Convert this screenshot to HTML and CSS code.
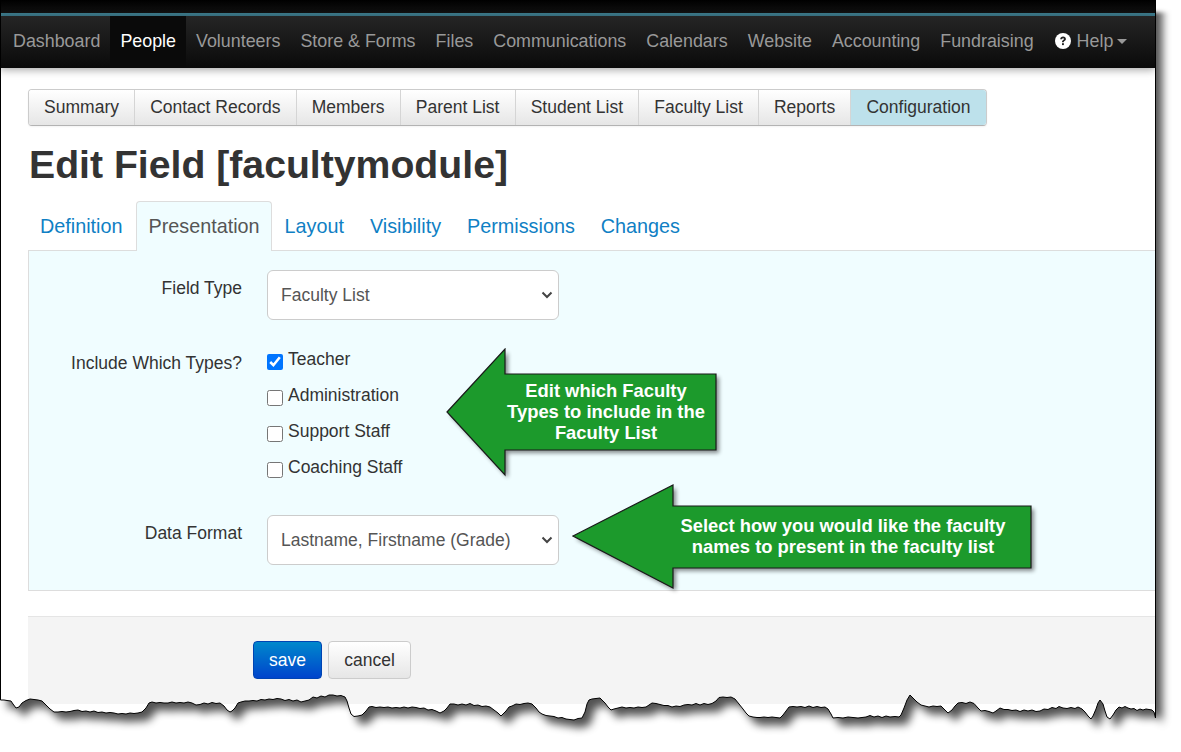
FILE: index.html
```html
<!DOCTYPE html>
<html lang="en">
<head>
<meta charset="utf-8">
<title>Edit Field</title>
<link rel="stylesheet" href="styles.css">
</head>
<body>
<div class="shot">
  <div class="topstrip"></div>
  <nav class="navbar">
    <a class="nav-item">Dashboard</a>
    <a class="nav-item active">People</a>
    <a class="nav-item">Volunteers</a>
    <a class="nav-item">Store &amp; Forms</a>
    <a class="nav-item">Files</a>
    <a class="nav-item">Communications</a>
    <a class="nav-item">Calendars</a>
    <a class="nav-item">Website</a>
    <a class="nav-item">Accounting</a>
    <a class="nav-item">Fundraising</a>
    <a class="nav-item help">
      <svg class="help-icon" viewBox="0 0 16 16"><circle cx="8" cy="8" r="8" fill="#fff"/><path d="M5.2 6.2C5.3 4.6 6.5 3.6 8.1 3.6c1.7 0 2.8 1 2.8 2.3 0 1.1-.7 1.7-1.4 2.2-.6.4-.7.7-.7 1.2H7c0-1.1.3-1.6 1.1-2.2.6-.4.9-.7.9-1.1 0-.5-.4-.8-.9-.8-.6 0-1 .4-1.1 1z" fill="#222"/><rect x="7" y="10.2" width="1.9" height="1.9" fill="#222"/></svg>
      Help<span class="caret"></span>
    </a>
  </nav>

  <main class="content">
    <div class="subnav">
      <a class="sub-btn">Summary</a>
      <a class="sub-btn">Contact Records</a>
      <a class="sub-btn">Members</a>
      <a class="sub-btn">Parent List</a>
      <a class="sub-btn">Student List</a>
      <a class="sub-btn">Faculty List</a>
      <a class="sub-btn">Reports</a>
      <a class="sub-btn current">Configuration</a>
    </div>

    <h1 class="title">Edit Field [facultymodule]</h1>

    <div class="tabs">
      <a class="tab">Definition</a>
      <a class="tab selected">Presentation</a>
      <a class="tab">Layout</a>
      <a class="tab">Visibility</a>
      <a class="tab">Permissions</a>
      <a class="tab">Changes</a>
    </div>

    <form class="panel">
      <div class="row row-type">
        <label class="row-label">Field Type</label>
        <select class="picker"><option>Faculty List</option></select>
      </div>
      <div class="row row-checks">
        <label class="row-label label-checks">Include Which Types?</label>
        <div class="checks">
          <label class="check"><input type="checkbox" checked><span>Teacher</span></label>
          <label class="check"><input type="checkbox"><span>Administration</span></label>
          <label class="check"><input type="checkbox"><span>Support Staff</span></label>
          <label class="check"><input type="checkbox"><span>Coaching Staff</span></label>
        </div>
      </div>
      <div class="row row-format">
        <label class="row-label">Data Format</label>
        <select class="picker"><option>Lastname, Firstname (Grade)</option></select>
      </div>
    </form>

    <div class="actions">
      <button class="btn btn-save" type="button">save</button>
      <button class="btn btn-cancel" type="button">cancel</button>
    </div>
  </main>
</div>

<div class="callout callout-types">
  <svg class="callout-shape" viewBox="0 0 290 146"><polygon class="arrow-shadow" points="1,64 59,1 59,26 270,26 270,102 59,102 59,127"/><polygon class="arrow" points="1,64 59,1 59,26 270,26 270,102 59,102 59,127"/></svg>
  <p class="callout-text">Edit which Faculty<br>Types to include in the<br>Faculty List</p>
</div>
<div class="callout callout-format">
  <svg class="callout-shape" viewBox="0 0 480 122"><polygon class="arrow-shadow" points="1,52 101,1 101,22 459,22 459,84 101,84 101,104"/><polygon class="arrow" points="1,52 101,1 101,22 459,22 459,84 101,84 101,104"/></svg>
  <p class="callout-text">Select how you would like the faculty<br>names to present in the faculty list</p>
</div>

<svg class="torn" viewBox="0 0 1181 752">
  <defs>
    <path id="paper" d="M0.5 -2H1155.5V718L1154 712 1152 710 1149 709.5 1146 709 1143 710 1140 709 1137 710.5 1134 708.5 1131 709 1128 708 1125 706.5 1122 708 1119 707 1116 710 1113 715 1110 719 1107 717 1105 711 1103 704 1100 700 1098 703 1096 709 1093 716 1091 719 1088 716 1085 712 1082 709 1078 707 1075 708.5 1071 707.5 1067 708.5 1063 708 1059 706.5 1056 708.5 1052 707.5 1048 709.5 1044 709 1040 711 1036 711.5 1032 710 1028 711 1024 710 1020 711.5 1016 710 1012 710.5 1008 709.5 1004 709.5 1000 708 996 711 993 713 989 711.5 985 710.5 981 711 978 708 974 703.5 970 702 966 703.5 962 702.5 958 703 955 706 952 710 948 713 945 710 941 706 937 706.5 933 706 929 707 925 706 921 705 917 702 913 698 910 695 907 700 904 708 901 715 899 717 895 716.5 890 717 886 716 882 717.5 878 716 874 717 870 715.5 866 717 862 717.5 858 718 853 717.5 848 717 843 718 838 717.5 833 718 831 714 828 709 825 707 821 707.5 817 706.5 813 707.5 809 706 805 707.5 801 706.5 797 707 793 706.5 789 707 786 711 783 715 780 718 776 717.5 772 717 768 717.5 764 717 760 717.5 757 717.5 753 717 749 716 746 713 743 709 739 704 735 699 731 697 727 697.5 723 697 719 697.5 716 701 712 703.5 708 704.5 704 703.5 700 705 696 703.5 692 705 688 704.5 684 705 680 706.5 676 706 672 707 668 705.5 664 705.5 660 704.5 656 703.5 652 703 649 705 646 707 642 707.5 638 707 634 708 630 707.5 626 708 622 707 618 708 614 709 611 710 608 707 605 703 602 700 600 698 596 698.5 592 699 589 700 587 704 585 712 582 718 578 718.5 574 720 570 719.5 566 719 562 717.5 558 718 554 716.5 550 716 546 715.5 542 714 539 712 536 708 532 704 528 703 524 703.5 520 704.5 516 704 512 706 509 707 506 711 503 714 501 716 498 713 494 710 490 707 486 706 482 706.5 478 705 474 705.5 470 703.5 466 705 462 704 458 705 454 704 450 704 447 708 444 711 440 713 436 711 432 709.5 428 710 424 708 420 708.5 416 707.5 412 707 408 708 404 707 400 708 396 707.5 392 708 388 707 384 707.5 380 707 376 707.5 372 706.5 369 707 366 711 362 715 358 716 354 716.5 351 714 349 708 347 701 345 697 341 695.5 337 696 333 695 329 695 325 697 321 696 317 698 313 697 309 700 305 701 301 702 297 700 293 701 289 699.5 285 700.5 281 699 277 698.5 273 699.5 269 699 265 700 261 699.5 257 701 253 700.5 249 701 245 701 241 702 238 703 235 708 232 711 230 712 227 710 224 706 220 703 216 703.5 212 702.5 208 704 204 703 200 704.5 196 705 192 703 188 702 184 703 180 702.5 176 703 172 702 168 703 164 703 160 702.5 156 703 152 702 149 703 146 708 142 712 138 713 134 713.5 130 713 126 714 122 713.5 118 714 114 713 110 712.5 106 713 102 712 98 712.5 94 711 90 712 86 711 82 711.5 78 710 74 710.5 70 711.5 66 712 62 711.5 58 712 54 712 50 709 46 705 42 701 38 700 34 699.5 30 699 26 700.5 22 703 19 707 16 708 13 704 11 701 7 700.5 4 700 0.5 700Z"/>
    <filter id="soft" x="-5%" y="-5%" width="110%" height="110%"><feGaussianBlur stdDeviation="4"/></filter>
    <filter id="fade" x="-50%" y="-100%" width="200%" height="300%"><feGaussianBlur stdDeviation="2"/></filter>
    <mask id="outside" maskUnits="userSpaceOnUse" x="0" y="0" width="1181" height="752">
      <rect class="mask-on" width="1181" height="752"/>
      <use class="mask-off" href="#paper"/>
      <rect class="mask-off" x="1150" y="-10" width="40" height="22" filter="url(#fade)"/>
    </mask>
  </defs>
  <rect class="paper-outside" width="1181" height="752" mask="url(#outside)"/>
  <g mask="url(#outside)">
    <use class="paper-shadow" href="#paper" filter="url(#soft)" transform="translate(7 8)"/>
  </g>
  <use class="paper-edge" href="#paper"/>
</svg>
</body>
</html>
```

FILE: styles.css
```css
* { box-sizing: border-box; }
html, body { margin: 0; padding: 0; background: #fff; }
body {
  position: relative;
  width: 1181px;
  height: 752px;
  overflow: hidden;
  font-family: "Liberation Sans", Arial, sans-serif;
  font-size: 17.5px;
  color: #333;
}
.shot { width: 1155px; height: 730px; overflow: hidden; background: #fff; }
.topstrip { height: 16px; background: linear-gradient(#000 0, #111 13px, #3d7b8c 13px, #3d7b8c 16px); }
.navbar {
  display: flex;
  height: 52px;
  background: linear-gradient(#252525, #0a0a0a);
  box-shadow: 0 2px 8px rgba(0, 0, 0, .35);
  position: relative;
  padding: 0 0 2px 3px;
}
.nav-item {
  display: flex;
  align-items: center;
  padding: 0 10px;
  color: #999;
  font-size: 17.88px;
  white-space: nowrap;
}
.nav-item.active { background: #0a0a0a; color: #fff; margin-bottom: -2px; padding-bottom: 2px; }
.help { gap: 6px; padding-left: 11px; }
.help-icon { width: 16px; height: 16px; }
.caret {
  width: 0; height: 0;
  margin-left: -2px;
  border-left: 5px solid transparent;
  border-right: 5px solid transparent;
  border-top: 5px solid #999;
}
.content { padding-top: 21px; }
.subnav {
  display: inline-flex;
  margin-left: 28px;
  height: 37px;
  border: 1px solid #ccc;
  border-bottom-color: #b3b3b3;
  border-radius: 4px;
  vertical-align: top;
  box-shadow: 0 1px 2px rgba(0,0,0,.05);
}
.sub-btn {
  display: flex;
  align-items: center;
  padding: 0 15.1px;
  background: linear-gradient(#fff, #e6e6e6);
  border-left: 1px solid #d5d5d5;
  color: #333;
  white-space: nowrap;
}
.sub-btn:first-child { border-left: 0; border-radius: 3px 0 0 3px; }
.sub-btn.current { background: #bde1eb; border-radius: 0 3px 3px 0; }
.title {
  margin: 15px 0 0 29px;
  height: 48px;
  font-size: 39.2px;
  line-height: 48px;
  font-weight: 700;
  color: #333;
}
.tabs {
  display: flex;
  margin: 12px 0 0 28px;
  height: 49px;
}
.tab {
  display: flex;
  align-items: center;
  padding: 2px 12px 0;
  margin-right: 2px;
  font-size: 19.8px;
  color: #0f7fc4;
  white-space: nowrap;
}
.tab.selected {
  color: #555;
  background: #f0fdff;
  border: 1px solid #ddd;
  border-bottom: 0;
  border-radius: 4px 4px 0 0;
  height: 50px;
  padding: 0 11px;
  margin-right: 1px;
  position: relative;
  z-index: 1;
}
.panel {
  height: 341px;
  margin-left: 28px;
  padding-top: 19px;
  background: #f0fdff;
  border: 1px solid #ddd;
  border-right: 0;
  display: flex;
  flex-direction: column;
}
.row { display: grid; grid-template-columns: 213px 292px; column-gap: 25px; }
.row-label { text-align: right; padding-top: 8px; color: #333; line-height: 20px; }
.label-checks { padding-top: 4px; }
.row-checks { margin-top: 29px; height: 166px; }
.picker {
  appearance: none;
  -webkit-appearance: none;
  height: 50px;
  width: 292px;
  padding: 0 13px;
  font: 17.5px "Liberation Sans", Arial, sans-serif;
  color: #555;
  background-color: #fff;
  background-image: url("data:image/svg+xml,%3Csvg xmlns='http://www.w3.org/2000/svg' viewBox='0 0 12 8'%3E%3Cpath d='M1.5 1.5 6 6l4.5-4.5' fill='none' stroke='%23444' stroke-width='2'/%3E%3C/svg%3E");
  background-repeat: no-repeat;
  background-size: 12px 8px;
  background-position: right 5px center;
  border: 1px solid #ccc;
  border-radius: 6px;
}
.checks { display: flex; flex-direction: column; gap: 16px; }
.check { display: flex; align-items: flex-start; height: 20px; line-height: 20px; gap: 5px; }
.check input { width: 16px; height: 16px; margin: 5px 0 0 0; flex: none; }
.actions {
  margin: 25px 0 0 28px;
  height: 88px;
  padding: 24px 0 0 225px;
  display: flex;
  gap: 6px;
  align-items: flex-start;
  background: #f4f4f4;
  border-top: 1px solid #e5e5e5;
}
.btn {
  height: 38px;
  font: 17.5px "Liberation Sans", Arial, sans-serif;
  border-radius: 4px;
  padding: 0 10px;
}
.btn-save { width: 69px; color: #fff; background: linear-gradient(#0088cc, #0044cc); border: 1px solid #0044b3; }
.btn-cancel { width: 83px; color: #333; background: linear-gradient(#fff, #e6e6e6); border: 1px solid #ccc; }

.callout { position: absolute; }
.callout-types { left: 446px; top: 348px; width: 290px; height: 146px; }
.callout-format { left: 572px; top: 484px; width: 480px; height: 122px; }
.callout-shape { display: block; width: 100%; height: 100%; }
.arrow { fill: #1c9a2c; stroke: #1a1a1a; stroke-width: 1.2; }
.arrow-shadow { fill: #000; opacity: .45; transform: translate(3px, 3px); filter: blur(2px); }
.callout-text {
  position: absolute;
  margin: 0;
  text-align: center;
  font-size: 18.4px;
  line-height: 21px;
  font-weight: 700;
  color: #fff;
  white-space: nowrap;
}
.callout-types .callout-text { left: 60px; top: 32px; width: 200px; }
.callout-format .callout-text { left: 101px; top: 31px; width: 340px; }

.torn { position: absolute; left: 0; top: 0; width: 1181px; height: 752px; pointer-events: none; }
.mask-on { fill: #fff; }
.mask-off { fill: #000; }
.paper-outside { fill: #fff; }
.paper-shadow { fill: #000; opacity: .68; }
.paper-edge { fill: none; stroke: #000; stroke-width: 1; stroke-linejoin: round; }
```
